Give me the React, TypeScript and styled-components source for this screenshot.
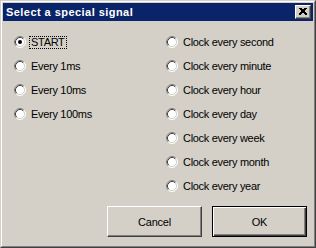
import React, { useState } from "react";
import styled, { createGlobalStyle } from "styled-components";

const GlobalStyle = createGlobalStyle`
  html, body {
    margin: 0;
    padding: 0;
    background: #d4d0c8;
  }
  * {
    box-sizing: border-box;
  }
`;

const leftItems = ["START", "Every 1ms", "Every 10ms", "Every 100ms"];
const rightItems = [
  "Clock every second",
  "Clock every minute",
  "Clock every hour",
  "Clock every day",
  "Clock every week",
  "Clock every month",
  "Clock every year",
];

const RadioMark = ({ checked }: { checked: boolean }) => (
  <svg width="12" height="12" viewBox="0 0 12 12">
    <circle cx="6" cy="6" r="5" fill="#fff" />
    <path d="M2.11 9.89 A5.5 5.5 0 0 1 9.89 2.11" stroke="#808080" fill="none" />
    <path d="M9.89 2.11 A5.5 5.5 0 0 1 2.11 9.89" stroke="#ffffff" fill="none" />
    <path d="M2.82 9.18 A4.5 4.5 0 0 1 9.18 2.82" stroke="#404040" fill="none" />
    <path d="M9.18 2.82 A4.5 4.5 0 0 1 2.82 9.18" stroke="#d4d0c8" fill="none" />
    {checked && <circle cx="6" cy="6" r="2" fill="#000" />}
  </svg>
);

const Radio = ({
  label,
  checked,
  focused,
  onSelect,
}: {
  label: string;
  checked: boolean;
  focused: boolean;
  onSelect: () => void;
}) => (
  <Option onClick={onSelect}>
    <RadioMark checked={checked} />
    <Label $focused={focused}>{label}</Label>
  </Option>
);

const App = () => {
  const [selected, setSelected] = useState("START");

  return (
    <>
      <GlobalStyle />
      <Window>
        <Inner>
          <TitleBar>
            <Title>Select a special signal</Title>
            <CloseButton aria-label="Close">
              <svg width="8" height="7" viewBox="0 0 8 7">
                <path
                  d="M0.5 0 L7.5 7 M1.5 0 L8.5 7 M7.5 0 L0.5 7 M6.5 0 L-0.5 7"
                  stroke="#000"
                  strokeWidth="1"
                  shapeRendering="crispEdges"
                />
              </svg>
            </CloseButton>
          </TitleBar>
          <Body>
            <Columns>
              <Column>
                {leftItems.map((item) => (
                  <Radio
                    key={item}
                    label={item}
                    checked={selected === item}
                    focused={item === "START"}
                    onSelect={() => setSelected(item)}
                  />
                ))}
              </Column>
              <Column>
                {rightItems.map((item) => (
                  <Radio
                    key={item}
                    label={item}
                    checked={selected === item}
                    focused={false}
                    onSelect={() => setSelected(item)}
                  />
                ))}
              </Column>
            </Columns>
            <Buttons>
              <Button>Cancel</Button>
              <Button $default>OK</Button>
            </Buttons>
          </Body>
        </Inner>
      </Window>
    </>
  );
};

export default App;

const Window = styled.div`
  width: 316px;
  height: 248px;
  border: 1px solid;
  border-color: #d4d0c8 #404040 #404040 #d4d0c8;
  background: #d4d0c8;
  font-family: Tahoma, "Liberation Sans", Arial, sans-serif;
  font-size: 11px;
  color: #000;
`;

const Inner = styled.div`
  height: 100%;
  border: 1px solid;
  border-color: #ffffff #808080 #808080 #ffffff;
  padding: 1px;
  display: flex;
  flex-direction: column;
`;

const TitleBar = styled.div`
  height: 18px;
  background: #0a246a;
  display: flex;
  align-items: center;
  justify-content: space-between;
  padding: 0 2px 0 3px;
`;

const Title = styled.span`
  color: #fff;
  font-weight: bold;
  font-size: 11px;
  letter-spacing: 0.45px;
`;

const CloseButton = styled.div`
  width: 16px;
  height: 14px;
  background: #d4d0c8;
  border: 1px solid;
  border-color: #ffffff #404040 #404040 #ffffff;
  box-shadow: inset -1px -1px #808080;
  display: flex;
  align-items: center;
  justify-content: center;
  padding-bottom: 1px;
`;

const Body = styled.div`
  flex: 1;
  display: flex;
  flex-direction: column;
  padding: 9px 6px 0 11px;
`;

const Columns = styled.div`
  display: grid;
  grid-template-columns: 152px 1fr;
`;

const Column = styled.div`
  display: flex;
  flex-direction: column;
`;

const Option = styled.div`
  height: 24px;
  display: flex;
  align-items: center;
  gap: 3px;
  cursor: default;
`;

const Label = styled.span<{ $focused: boolean }>`
  padding: 0 1px;
  line-height: 11px;
  letter-spacing: -0.3px;
  border: 1px dotted ${(p) => (p.$focused ? "#000" : "transparent")};
`;

const Buttons = styled.div`
  margin-top: 8px;
  display: flex;
  justify-content: flex-end;
  gap: 10px;
`;

const Button = styled.button<{ $default?: boolean }>`
  width: 95px;
  height: 31px;
  background: #d4d0c8;
  font-family: Tahoma, "Liberation Sans", Arial, sans-serif;
  font-size: 11px;
  letter-spacing: -0.2px;
  color: #000;
  padding: 0;
  border: 1px solid;
  border-color: ${(p) =>
    p.$default ? "#000" : "#ffffff #404040 #404040 #ffffff"};
  box-shadow: ${(p) =>
    p.$default
      ? "inset 1px 1px #ffffff, inset -1px -1px #404040, inset -2px -2px #808080"
      : "inset -1px -1px #808080"};
`;
